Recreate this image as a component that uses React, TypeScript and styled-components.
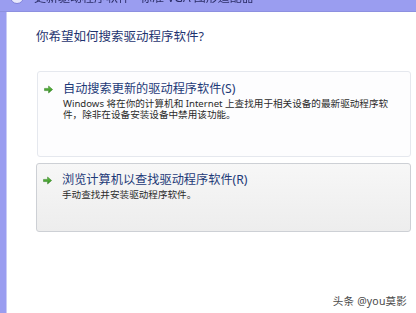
import React from "react";
import styled, { createGlobalStyle } from "styled-components";

const GlobalStyle = createGlobalStyle`
  html, body {
    margin: 0;
    padding: 0;
    width: 416px;
    height: 313px;
    overflow: hidden;
    background: #ffffff;
  }
  #root {
    width: 416px;
    height: 313px;
  }
`;

const Frame = styled.div`
  position: relative;
  display: flex;
  flex-direction: column;
  width: 416px;
  height: 313px;
  background: #9a9df0;
  font-family: "Noto Sans", "Noto Sans CJK SC", sans-serif;
  overflow: hidden;
`;

const TitleBar = styled.div`
  height: 12px;
  flex: none;
  overflow: hidden;
  border-bottom: 1px solid #8d90e0;
  box-sizing: border-box;
`;

const TitleRow = styled.div`
  display: flex;
  align-items: center;
  gap: 10px;
  margin-top: -11px;
  padding-left: 10px;
  height: 16px;
  filter: blur(0.6px);
`;

const BackButton = styled.div`
  width: 14px;
  height: 14px;
  border-radius: 50%;
  background: #e8e9fb;
  border: 1px solid #7e81d8;
  box-sizing: border-box;
`;

const TitleText = styled.span`
  font-size: 12px;
  color: #2a2c66;
  white-space: nowrap;
`;

const Body = styled.div`
  flex: 1;
  display: flex;
  padding-left: 6px;
`;

const Pane = styled.div`
  flex: 1;
  background: #ffffff;
  border-left: 1px solid #c9cbf6;
  padding: 17px 5px 0 29px;
  display: flex;
  flex-direction: column;
`;

const Heading = styled.div`
  font-size: 12.5px;
  line-height: 16px;
  color: #1f3470;
  margin-bottom: 26px;
`;

const Option = styled.div<{ $shaded?: boolean; $height: number }>`
  height: ${(p) => p.$height}px;
  box-sizing: border-box;
  margin-left: ${(p) => (p.$shaded ? 0 : 1)}px;
  margin-bottom: 6px;
  border-radius: 3px;
  border: 1px solid ${(p) => (p.$shaded ? "#cdd0d5" : "#e5e8ee")};
  background: ${(p) =>
    p.$shaded ? "linear-gradient(#f7f7f7, #ededed)" : "#fdfdfe"};
  padding: ${(p) => (p.$shaded ? 8 : 9)}px 8px 0 6px;
  display: flex;
  gap: 10px;
`;

const Arrow = styled.svg`
  flex: none;
  margin-top: 4px;
`;

const OptionText = styled.div`
  display: flex;
  flex-direction: column;
`;

const OptionTitle = styled.div`
  font-size: 12.2px;
  line-height: 16px;
  color: #1e3a78;
  white-space: nowrap;
`;

const OptionDesc = styled.div`
  font-size: 9.6px;
  line-height: 11px;
  color: #2b2b2b;
  margin-top: 1px;
  white-space: nowrap;
`;

const Watermark = styled.div`
  position: absolute;
  right: 9px;
  bottom: 5px;
  font-size: 10.5px;
  color: #4a4a4a;
  letter-spacing: 0.2px;
  text-shadow: 0 0 2px #ffffff;
`;

function GreenArrow() {
  return (
    <Arrow width="9" height="9" viewBox="0 0 9 9">
      <defs>
        <linearGradient id="g" x1="0" y1="0" x2="0" y2="1">
          <stop offset="0" stopColor="#6cc44a" />
          <stop offset="1" stopColor="#2e8a1e" />
        </linearGradient>
      </defs>
      <path
        d="M0.5 3.4 H4.6 V1 L8.6 4.5 L4.6 8 V5.6 H0.5 Z"
        fill="url(#g)"
        stroke="#2b7d1c"
        strokeWidth="0.5"
        strokeLinejoin="round"
      />
    </Arrow>
  );
}

export default function App() {
  return (
    <>
      <GlobalStyle />
      <Frame>
        <TitleBar>
          <TitleRow>
            <BackButton />
            <TitleText>更新驱动程序软件 - 标准 VGA 图形适配器</TitleText>
          </TitleRow>
        </TitleBar>
        <Body>
          <Pane>
            <Heading>你希望如何搜索驱动程序软件?</Heading>
            <Option $height={86}>
              <GreenArrow />
              <OptionText>
                <OptionTitle>自动搜索更新的驱动程序软件(S)</OptionTitle>
                <OptionDesc>
                  Windows 将在你的计算机和 Internet 上查找用于相关设备的最新驱动程序软
                  <br />
                  件，除非在设备安装设备中禁用该功能。
                </OptionDesc>
              </OptionText>
            </Option>
            <Option $shaded $height={69}>
              <GreenArrow />
              <OptionText>
                <OptionTitle>浏览计算机以查找驱动程序软件(R)</OptionTitle>
                <OptionDesc>手动查找并安装驱动程序软件。</OptionDesc>
              </OptionText>
            </Option>
          </Pane>
        </Body>
        <Watermark>头条 @you莫影</Watermark>
      </Frame>
    </>
  );
}
